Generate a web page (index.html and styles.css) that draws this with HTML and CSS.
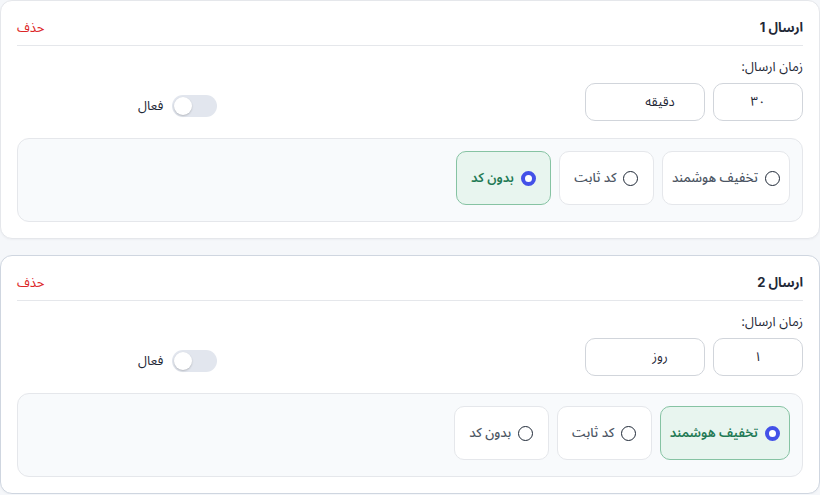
FILE: index.html
```html
<!DOCTYPE html>
<html lang="fa" dir="rtl">
<head>
<meta charset="utf-8">
<title>ارسال‌ها</title>
<link rel="stylesheet" href="styles.css">
</head>
<body>
<div class="card">
  <div class="card-head">
    <div class="title">ارسال 1</div>
    <button class="del">حذف</button>
  </div>
  <div class="row">
    <div class="time">
      <div class="label">زمان ارسال:</div>
      <div class="inputs">
        <div class="field num">۳۰</div>
        <div class="field unit">دقیقه</div>
      </div>
    </div>
    <div class="active">
      <span class="switch"><span class="knob"></span></span>
      <span class="active-label">فعال</span>
    </div>
  </div>
  <div class="options">
    <div class="opt"><span class="radio"></span><span>تخفیف هوشمند</span></div>
    <div class="opt"><span class="radio"></span><span>کد ثابت</span></div>
    <div class="opt selected"><span class="radio"></span><span>بدون کد</span></div>
  </div>
</div>
<div class="card hover">
  <div class="card-head">
    <div class="title">ارسال 2</div>
    <button class="del">حذف</button>
  </div>
  <div class="row">
    <div class="time">
      <div class="label">زمان ارسال:</div>
      <div class="inputs">
        <div class="field num">۱</div>
        <div class="field unit">روز</div>
      </div>
    </div>
    <div class="active">
      <span class="switch"><span class="knob"></span></span>
      <span class="active-label">فعال</span>
    </div>
  </div>
  <div class="options">
    <div class="opt selected"><span class="radio"></span><span>تخفیف هوشمند</span></div>
    <div class="opt"><span class="radio"></span><span>کد ثابت</span></div>
    <div class="opt"><span class="radio"></span><span>بدون کد</span></div>
  </div>
</div>
</body>
</html>
```
FILE: styles.css
```css
* { box-sizing: border-box; }
html, body { margin: 0; padding: 0; }
body {
  direction: rtl;
  background: #f5f7fa;
  font-family: Inter, "Noto Sans Arabic", "DejaVu Sans", sans-serif;
  font-size: 13px;
  color: #1f2937;
}
.card {
  background: #fff;
  border: 1px solid #e5e7eb;
  border-radius: 12px;
  padding: 17px 16px 16px;
  margin-bottom: 16px;
  box-shadow: 0 1px 2px rgba(15, 23, 42, 0.04);
}
.card.hover { border-color: #cfd6e0; margin-bottom: 0; }
.card-head {
  display: flex;
  justify-content: space-between;
  align-items: center;
  padding-bottom: 9px;
  border-bottom: 1px solid #e5e7eb;
}
.title { font-weight: 700; font-size: 13px; line-height: 18px; color: #1f2937; }
.del {
  background: none; border: 0; padding: 0; margin: 0;
  font: inherit; font-size: 13px; line-height: 18px; color: #dc2626; cursor: pointer;
}
.row {
  display: flex;
  justify-content: space-between;
  align-items: flex-end;
  margin-top: 11px;
  padding-left: 121px;
}
.label { line-height: 18px; margin-bottom: 8px; color: #1f2937; }
.inputs { display: flex; gap: 8px; }
.field {
  height: 38px;
  border: 1px solid #d1d5db;
  border-radius: 10px;
  display: flex; align-items: center; justify-content: center;
  color: #1f2937;
  background: #fff;
}
.field.num { width: 90px; }
.field.unit { width: 120px; padding-left: 30px; }
.active { display: flex; align-items: center; gap: 9px; margin-bottom: 1px; }
.switch {
  width: 45px; height: 22px; border-radius: 11px; background: #e2e6ee;
  display: flex; justify-content: flex-end; align-items: center; padding: 0 2px;
}
.knob {
  width: 18px; height: 18px; border-radius: 50%; background: #fff;
  box-shadow: 0 1px 2px rgba(0,0,0,0.2);
}
.active-label { color: #1f2937; }
.options {
  margin-top: 17px;
  background: #f8fafc;
  border: 1px solid #e5e7eb;
  border-radius: 12px;
  padding: 12px 12px 16px;
  display: flex; gap: 8px;
}
.opt {
  height: 54px;
  min-width: 95px;
  padding: 0 9px;
  border: 1px solid #e5e7eb;
  border-radius: 10px;
  background: #fff;
  display: flex; align-items: center; justify-content: center; gap: 7px;
  color: #4b5563; font-weight: 500;
}
.radio {
  width: 15px; height: 15px; border-radius: 50%;
  border: 1.5px solid #1f2937; background: #fff; flex: none;
}
.opt.selected { background: #e8f5ef; border-color: #86c3a3; color: #1f7a55; font-weight: 600; }
.opt.selected .radio { border: 4px solid #4351e8; }
```
